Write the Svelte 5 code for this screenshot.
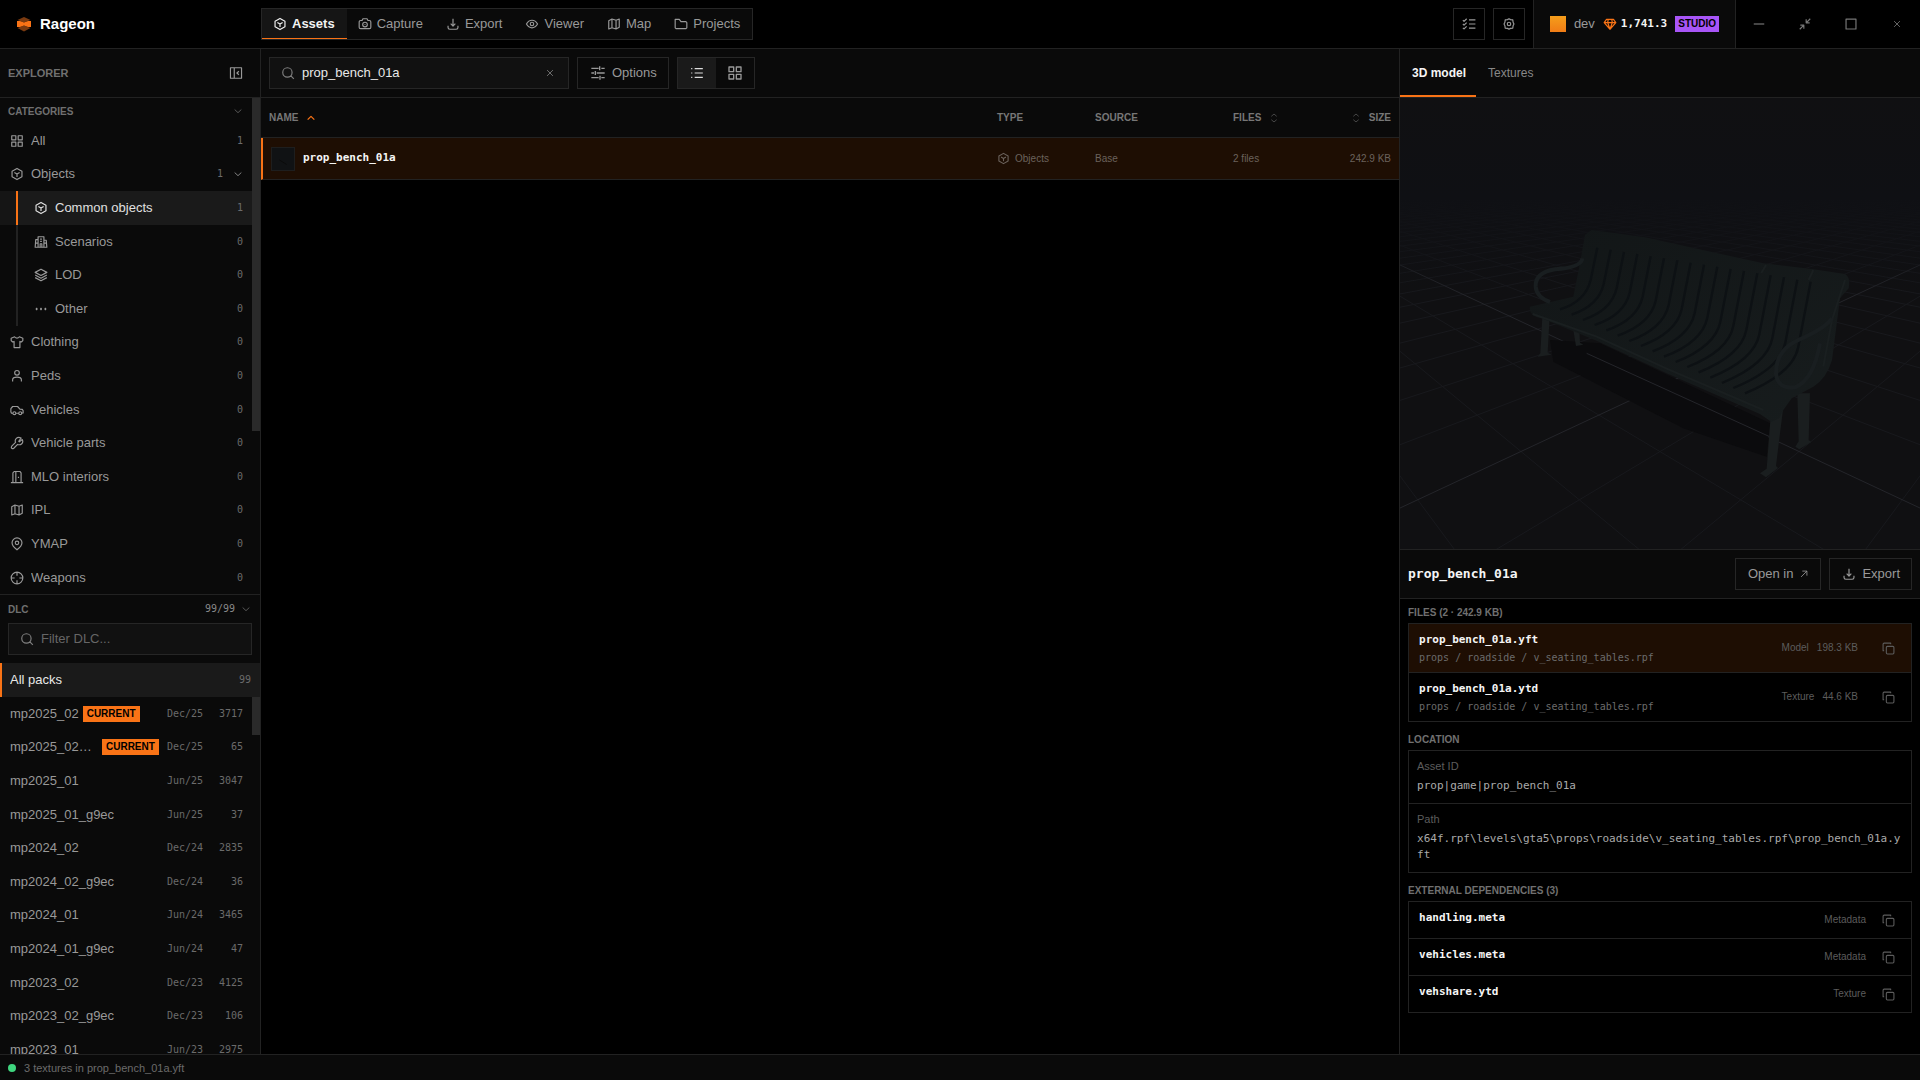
<script>
  const icons = {
    cube: 'M12 2.5l8.5 4.8v9.4L12 21.5l-8.5-4.8V7.3z M7.5 9.3 12 12l4.5-2.7 M12 12v5',
    camera: 'M2 8.5A2.5 2.5 0 0 1 4.5 6H7l1.5-3h7L17 6h2.5A2.5 2.5 0 0 1 22 8.5v9a2.5 2.5 0 0 1-2.5 2.5h-15A2.5 2.5 0 0 1 2 17.5z M16 13a4 4 0 1 1-8 0a4 4 0 1 1 8 0 M12 12.5v1',
    download: 'M12 3v12 M8 11.5l4 4 4-4 M3.5 15v3a3 3 0 0 0 3 3h11a3 3 0 0 0 3-3v-3',
    eye: 'M2.5 12C5 7.5 8.5 5.5 12 5.5s7 2 9.5 6.5C19 16.5 15.5 18.5 12 18.5S5 16.5 2.5 12z M15 12a3 3 0 1 1-6 0a3 3 0 1 1 6 0',
    map: 'M3 6.5 8.5 3.5l7 2 5.5-2v14l-5.5 3-7-2-5.5 2z M8.5 3.5v15 M15.5 5.5v15',
    folder: 'M2 4h7l3 4h8.5L22 9.5V18.5L20.5 20h-17L2 18.5z',
    tasks: 'M1.5 5.5 3.5 7.5 8 3 M1.5 12 3.5 14 8 9.5 M1.5 18.5 3.5 20.5 8 16 M12 5h11 M12 12h11 M12 19h11',
    gear: 'M9.5 4.5 12 3l2.5 1.5 4 .5.5 4 1.5 3-1.5 3-.5 4-4 .5L12 21l-2.5-1.5-4-.5-.5-4L3.5 12 5 9l.5-4z M15 12a3 3 0 1 1-6 0a3 3 0 1 1 6 0',
    gem: 'M6 4h12l4 5.5L12 21 2 9.5z M2 9.5h20 M8 9.5 12 21l4-11.5 M8 9.5 9 4 M16 9.5 15 4',
    minus: 'M3 12h18',
    shrink: 'M21 3l-7 7 M14 4v6h6 M3 21l7-7 M4 14h6v6',
    square: 'M3.5 3.5h17v17h-17z',
    close: 'M5 5l14 14 M19 5 5 19',
    panel: 'M2.5 3h19v18h-19z M9 3v18 M17 9l-3.5 3 3.5 3',
    down: 'M4 8.5l8 7.5 8-7.5',
    up: 'M4 16l8-8 8 8',
    sort: 'M5.5 8 12 2.5 18.5 8 M5.5 16 12 21.5 18.5 16',
    grid: 'M3 3h7v7H3z M14 3h7v7h-7z M3 14h7v7H3z M14 14h7v7h-7z',
    search: 'M19 11a8 8 0 1 1-16 0a8 8 0 1 1 16 0 M17 17l5 5',
    sliders: 'M2 5h11 M17 5h5 M14.5 2v6 M2 12h4 M10 12h12 M8 9v6 M2 19h11 M17 19h5 M15 16v6',
    list: 'M2 4.5h2 M2 12h2 M2 19.5h2 M8 4.5h14 M8 12h14 M8 19.5h14',
    building: 'M7 21V3h10v18 M7 8H3L2 21h20L21 9h-4 M10.5 7h3 M10.5 11h3 M10.5 21v-6h3v6 M2 14h5 M17 14h5',
    layers: 'M12 2 22 7.5 12 13 2 7.5z M2 12l10 5.5L22 12 M2 16.5 12 22l10-5.5',
    dots: 'M4 11h1v2H4z M11.5 11h1v2h-1z M19 11h1v2h-1z',
    shirt: 'M8 3 2 5.5v4L4.5 12 7 11v10.5h10V11l2.5 1L22 9.5v-4L16 3c-.5 3-7.5 3-8 0z',
    user: 'M16 6.5a4 4 0 1 1-8 0a4 4 0 1 1 8 0 M4.5 21.5v-3c0-6 15-6 15 0v3',
    car: 'M5 17.5H2.5L1.5 15V9.5L4.5 6H13l4 4.5 4 .5 1.5 2v4L20 17.5 M10 17.5h5 M10 17.5a2.5 2.5 0 1 1-5 0a2.5 2.5 0 1 1 5 0 M20 17.5a2.5 2.5 0 1 1-5 0a2.5 2.5 0 1 1 5 0',
    wrench: 'M15 9l4-5.5C12 0 7.5 6 9.5 11L3 17.5C1 20.5 4 23 6.5 21L13 14.5C18.5 16.5 24 12 21 6l-5 4z',
    door: 'M1.5 21.5h21 M5 21.5V5l2.5-2.5H17L19 5v16.5 M5 5v16 M10 3v18 M14.5 11.5v2',
    pin: 'M12 22C6 17.5 3.5 13.5 3.5 10a8.5 8.5 0 0 1 17 0c0 3.5-2.5 7.5-8.5 12z M15 10a3 3 0 1 1-6 0a3 3 0 1 1 6 0',
    target: 'M22 12a10 10 0 1 1-20 0a10 10 0 1 1 20 0 M12 2v6 M12 16v6 M2 12h6 M16 12h6',
    arrow: 'M5 19 19 5 M8 5h11v11',
    copy: 'M10 8h10a2 2 0 0 1 2 2v10a2 2 0 0 1-2 2H10a2 2 0 0 1-2-2V10a2 2 0 0 1 2-2z M16 4V2H4a2 2 0 0 0-2 2v12h2'
  };

  const tabs = [
    ['cube', 'Assets'], ['camera', 'Capture'], ['download', 'Export'],
    ['eye', 'Viewer'], ['map', 'Map'], ['folder', 'Projects']
  ];
  const windowControls = [
    ['minus', 'Minimize', 14], ['shrink', 'Compact', 14], ['square', 'Maximize', 14], ['close', 'Close', 10]
  ];
  const objectKinds = [
    ['cube', 'Common objects', 1], ['building', 'Scenarios', 0],
    ['layers', 'LOD', 0], ['dots', 'Other', 0]
  ];
  const categories = [
    ['shirt', 'Clothing'], ['user', 'Peds'], ['car', 'Vehicles'], ['wrench', 'Vehicle parts'],
    ['door', 'MLO interiors'], ['map', 'IPL'], ['pin', 'YMAP'], ['target', 'Weapons']
  ];
  const packs = [
    ['mp2025_02', 'Dec/25', 3717, true], ['mp2025_02_g9ec', 'Dec/25', 65, true],
    ['mp2025_01', 'Jun/25', 3047], ['mp2025_01_g9ec', 'Jun/25', 37],
    ['mp2024_02', 'Dec/24', 2835], ['mp2024_02_g9ec', 'Dec/24', 36],
    ['mp2024_01', 'Jun/24', 3465], ['mp2024_01_g9ec', 'Jun/24', 47],
    ['mp2023_02', 'Dec/23', 4125], ['mp2023_02_g9ec', 'Dec/23', 106],
    ['mp2023_01', 'Jun/23', 2975]
  ];
  const files = [
    ['prop_bench_01a.yft', 'Model', '198.3 KB'],
    ['prop_bench_01a.ytd', 'Texture', '44.6 KB']
  ];
  const dependencies = [
    ['handling.meta', 'Metadata'], ['vehicles.meta', 'Metadata'], ['vehshare.ytd', 'Texture']
  ];

  let query = $state('prop_bench_01a');
  let filter = $state('');

  // Perspective projection of a floor point onto the preview.
  function project(a, b) {
    const w = 1 - 0.109 * (a + b);
    return `${Math.round(780 + (163 * (a - b)) / w)} ${Math.round(699 / w - 79)}`;
  }
  const steps = Array.from({ length: 61 }, (_, i) => i - 30).filter((i) => i !== 0);
  const floor = steps
    .map((i) => `M${project(i, -40)}L${project(i, 7 - i)}M${project(-40, i)}L${project(7 - i, i)}`)
    .join('');
  const axes = `M${project(0, -40)}L${project(0, 7)}M${project(-40, 0)}L${project(7, 0)}`;

  // Gaps between the slats, running down the backrest and out over the seat.
  const gaps = Array.from({ length: 17 }, (_, i) => {
    const t = i / 16;
    const p = (x0, x1, y0, y1) => `${Math.round(x0 + (x1 - x0) * t)} ${Math.round(y0 + (y1 - y0) * t)}`;
    return `M${p(592, 1232, 203, 305)}L${p(572, 1195, 300, 500)}Q${p(556, 1180, 365, 580)} ${p(480, 1035, 388, 640)}`;
  }).join('');
</script>

{#snippet icon(name, size = 14)}
  <svg class="icon" width={size} height={size} viewBox="0 0 24 24" aria-hidden="true"><path d={icons[name]} /></svg>
{/snippet}

<div class="app">
  <header class="topbar">
    <div class="brand">
      <svg width="16" height="16" viewBox="0 0 16 16" aria-hidden="true">
        <path fill="#7a3a10" d="M8 1l6.5 3L8 6.5 1.5 4zM8 9.5l6.5 2.5L8 15.5 1.5 12z" />
        <path fill="#f97316" d="M1 5h3l4 1.5L12 5h3v6h-3L8 9.5 4 11H1z" />
      </svg>
      <strong>Rageon</strong>
    </div>
    <nav class="tabs">
      {#each tabs as [name, label], i}
        <button class:active={i === 0}>{@render icon(name)}{label}</button>
      {/each}
    </nav>
    <div class="tools">
      <button class="square" aria-label="Tasks">{@render icon('tasks')}</button>
      <button class="square" aria-label="Settings">{@render icon('gear')}</button>
    </div>
    <div class="account">
      <span class="avatar"></span>
      <span class="user">dev</span>
      <span class="credits">{@render icon('gem')}<b>1,741.3</b></span>
      <span class="badge studio">STUDIO</span>
    </div>
    <div class="window">
      {#each windowControls as [name, label, size]}
        <button aria-label={label}>{@render icon(name, size)}</button>
      {/each}
    </div>
  </header>

  <div class="body">
    <aside class="sidebar">
      <div class="bar explorer">
        <h2>EXPLORER</h2>
        <button class="bare" aria-label="Collapse explorer">{@render icon('panel')}</button>
      </div>
      <div class="sections">
        <section class="categories">
          <div class="scroll">
            <div class="heading">
              <h3>CATEGORIES</h3>
              <button class="bare dim" aria-label="Toggle categories">{@render icon('down', 10)}</button>
            </div>
            <button class="row">{@render icon('grid')}<span class="name">All</span><span class="count">1</span></button>
            <button class="row">
              {@render icon('cube')}<span class="name">Objects</span><span class="count">1</span>
              <span class="twist">{@render icon('down', 10)}</span>
            </button>
            <div class="children">
              {#each objectKinds as [name, label, count], i}
                <button class="row child" class:active={i === 0}>
                  {@render icon(name)}<span class="name">{label}</span><span class="count">{count}</span>
                </button>
              {/each}
            </div>
            {#each categories as [name, label]}
              <button class="row">{@render icon(name)}<span class="name">{label}</span><span class="count">0</span></button>
            {/each}
          </div>
          <div class="track"><div class="thumb tall"></div></div>
        </section>

        <section class="dlc">
          <div class="heading">
            <h3>DLC</h3>
            <span class="total">99/99</span>
            <button class="bare dim" aria-label="Toggle DLC">{@render icon('down', 10)}</button>
          </div>
          <label class="field filter">
            {@render icon('search')}
            <input type="text" placeholder="Filter DLC..." aria-label="Filter DLC" bind:value={filter} />
          </label>
          <button class="row all"><span class="name">All packs</span><span class="count">99</span></button>
          <div class="packs">
            <div class="scroll">
              {#each packs as [name, date, count, current]}
                <button class="row pack">
                  <span class="title">
                    <span class="name">{name}</span>
                    {#if current}<span class="badge current">CURRENT</span>{/if}
                  </span>
                  <span class="date">{date}</span>
                  <span class="count">{count}</span>
                </button>
              {/each}
            </div>
            <div class="track"><div class="thumb short"></div></div>
          </div>
        </section>
      </div>
    </aside>

    <main>
      <div class="bar toolbar">
        <label class="field search">
          {@render icon('search')}
          <input type="text" aria-label="Search assets" bind:value={query} />
          <button class="bare" aria-label="Clear search" onclick={() => (query = '')}>{@render icon('close', 10)}</button>
        </label>
        <button class="box">{@render icon('sliders', 16)}Options</button>
        <div class="views">
          <button class="active" aria-label="List view">{@render icon('list')}</button>
          <button aria-label="Grid view">{@render icon('grid', 16)}</button>
        </div>
      </div>
      <table>
        <thead>
          <tr>
            <th><button class="sorter on">NAME {@render icon('up', 10)}</button></th>
            <th class="type">TYPE</th>
            <th class="source">SOURCE</th>
            <th class="files"><button class="sorter">FILES {@render icon('sort', 10)}</button></th>
            <th class="size"><button class="sorter">{@render icon('sort', 10)} SIZE</button></th>
          </tr>
        </thead>
        <tbody>
          <tr>
            <td>
              <div class="asset">
                <svg class="preview" width="24" height="24" viewBox="0 0 24 24" aria-hidden="true">
                  <path d="M8 13l8 5" />
                </svg>
                <b>prop_bench_01a</b>
              </div>
            </td>
            <td><span class="kind">{@render icon('cube', 13)}Objects</span></td>
            <td>Base</td>
            <td>2 files</td>
            <td class="size">242.9 KB</td>
          </tr>
        </tbody>
      </table>
    </main>

    <aside class="details">
      <div class="bar modes" role="tablist">
        <button class="active" role="tab" aria-selected="true">3D model</button>
        <button role="tab" aria-selected="false">Textures</button>
      </div>

      <div class="viewport">
        <svg viewBox="0 -246 1560 1353" preserveAspectRatio="xMidYMid slice" role="img" aria-label="3D preview of a bench">
          <defs>
            <linearGradient id="fog" x1="0" y1="0" x2="0" y2="1">
              <stop offset="0" stop-color="#101012" />
              <stop offset=".5" stop-color="#0f1014" />
              <stop offset="1" stop-color="#0f1014" stop-opacity="0" />
            </linearGradient>
            <linearGradient id="paint" x1="0" y1="0" x2="1" y2="1">
              <stop offset="0" stop-color="#121617" />
              <stop offset="1" stop-color="#171c1d" />
            </linearGradient>
          </defs>
          <path class="floor" d={floor} />
          <path class="axes" d={axes} />
          <rect x="-200" y="-246" width="1960" height="600" fill="url(#fog)" />
          <path fill="#0b0b0d" d="M450 480 600 490 1110 730 1100 830 850 745 460 545z" />
          <path class="axes" d="M560 520 1120 775" />
          <path class="leg" d="M427 410h22l-6 108 12 6-42 6 8-10zM520 450h18l2 38 10 6-22 4z" />
          <path class="leg" d="M1192 640h38l-4 140 8 6-36 22-12-8 10-16zM1112 710l38-30-22 178 6 6-36 28-18-12 20-14z" />
          <path
            fill="url(#paint)"
            d="M555 165 575 150 735 172 1090 250 1240 268 1335 282Q1352 292 1346 325L1320 355 1296 540Q1280 595 1240 620L1175 655 1150 690 1138 715 1115 726 1080 702 800 580 590 482 425 415Q385 408 390 380L520 350 540 250z"
          />
          <path class="gaps" d={gaps} />
          <path class="edge" d="M398 402 590 470 800 566 1090 690 M1098 255l-14 24 M1240 270l-14 30 M1335 300 1296 420 1270 560" />
          <path class="arm" d="M547 235Q545 262 465 268 405 278 407 320 410 352 450 366" />
          <path class="arm" d="M1296 415Q1275 445 1195 480 1128 510 1128 580 1132 628 1185 622 1240 600 1260 490" />
        </svg>
      </div>

      <div class="bar titlebar">
        <h1>prop_bench_01a</h1>
        <button class="box">Open in {@render icon('arrow', 10)}</button>
        <button class="box">{@render icon('download')}Export</button>
      </div>

      <div class="info">
        <h3>FILES (2 · 242.9 KB)</h3>
        <ul class="card">
          {#each files as [name, kind, size], i}
            <li class:active={i === 0}>
              <div class="file"><b>{name}</b><span class="path">props / roadside / v_seating_tables.rpf</span></div>
              <span>{kind}</span><span class="bytes">{size}</span>
              <button class="bare copy" aria-label="Copy {name}">{@render icon('copy', 13)}</button>
            </li>
          {/each}
        </ul>

        <h3>LOCATION</h3>
        <dl class="card">
          <div><dt>Asset ID</dt><dd>prop|game|prop_bench_01a</dd></div>
          <div><dt>Path</dt><dd>{'x64f.rpf\\levels\\gta5\\props\\roadside\\v_seating_tables.rpf\\prop_bench_01a.yft'}</dd></div>
        </dl>

        <h3>EXTERNAL DEPENDENCIES (3)</h3>
        <ul class="card">
          {#each dependencies as [name, kind]}
            <li>
              <div class="file"><b>{name}</b></div>
              <span>{kind}</span>
              <button class="bare copy near" aria-label="Copy {name}">{@render icon('copy', 13)}</button>
            </li>
          {/each}
        </ul>
      </div>
    </aside>
  </div>

  <footer><span class="dot"></span>3 textures in prop_bench_01a.yft</footer>
</div>

<style>
  :global(body) {
    margin: 0;
    background: #000;
  }
  .app {
    --line: #222;
    --panel: #0a0a0a;
    --orange: #f97316;
    --mono: 'DejaVu Sans Mono', 'Liberation Mono', monospace;
    display: flex;
    flex-direction: column;
    height: 100vh;
    overflow: hidden;
    background: #000;
    color: #999;
    font: 13px/16px 'Liberation Sans', Arial, sans-serif;
  }
  .app *, .app {
    box-sizing: border-box;
  }
  button {
    display: flex;
    align-items: center;
    margin: 0;
    padding: 0;
    border: 0;
    background: none;
    color: inherit;
    font: inherit;
    text-align: left;
    cursor: pointer;
  }
  h1, h2, h3, ul, dl, dd {
    margin: 0;
    padding: 0;
    list-style: none;
  }
  h2, h3 {
    color: #707070;
    font-size: 10px;
    font-weight: 700;
    line-height: 15px;
  }
  .icon {
    flex: none;
    fill: none;
    stroke: currentColor;
    stroke-width: 2;
    stroke-linejoin: round;
  }
  .badge {
    flex: none;
    color: #000;
    font-size: 10px;
    font-weight: 700;
  }
  .bar {
    display: flex;
    flex: none;
    align-items: center;
    height: 49px;
    padding: 0 8px;
    border-bottom: 1px solid var(--line);
    background: var(--panel);
  }
  .dim {
    color: #666;
  }

  .topbar {
    display: flex;
    flex: none;
    align-items: center;
    height: 49px;
    border-bottom: 1px solid var(--line);
  }
  .brand {
    display: flex;
    align-items: center;
    gap: 8px;
    width: 261px;
    padding-left: 16px;
    color: #fff;
    font-size: 15px;
  }
  .tabs {
    display: flex;
    height: 32px;
    border: 1px solid #262626;
    background: var(--panel);
  }
  .tabs button {
    gap: 5px;
    padding: 0 12px 0 11px;
    border-bottom: 1px solid transparent;
  }
  .tabs .active {
    border-color: var(--orange);
    background: #151515;
    color: #f2f2f2;
    font-weight: 700;
  }
  .tools {
    display: flex;
    gap: 8px;
    margin: 0 8px 0 auto;
  }
  .square {
    justify-content: center;
    width: 32px;
    height: 32px;
    border: 1px solid #262626;
  }
  .account {
    display: flex;
    align-items: center;
    gap: 8px;
    height: 48px;
    padding: 0 16px;
    border: solid var(--line);
    border-width: 0 1px;
    background: var(--panel);
  }
  .avatar {
    width: 16px;
    height: 16px;
    background: linear-gradient(#f59e1b, #f07c16);
  }
  .credits {
    display: flex;
    align-items: center;
    gap: 4px;
    color: var(--orange);
  }
  .credits b {
    color: #f5f5f5;
    font: 700 11px/16px var(--mono);
  }
  .studio {
    padding: 0 3px;
    background: #a855f7;
  }
  .window {
    display: flex;
    height: 48px;
    color: #777;
  }
  .window button {
    justify-content: center;
    width: 46px;
  }

  .body {
    display: flex;
    flex: 1;
    min-height: 0;
  }
  .sidebar {
    display: flex;
    flex: none;
    flex-direction: column;
    width: 261px;
    border-right: 1px solid var(--line);
    background: var(--panel);
  }
  .explorer {
    justify-content: space-between;
    padding-right: 17px;
  }
  .explorer h2 {
    font-size: 11px;
  }
  .sections {
    display: grid;
    flex: 1;
    grid-template-rows: 27fr 25fr;
    grid-template-columns: minmax(0, 1fr);
    min-height: 0;
  }
  .categories, .packs {
    display: flex;
    min-height: 0;
    overflow: hidden;
  }
  .scroll {
    flex: 1;
    min-width: 0;
  }
  .track {
    flex: none;
    width: 8px;
  }
  .thumb {
    background: #2a2a2a;
  }
  .tall {
    height: 67%;
  }
  .short {
    height: 38px;
  }
  .heading {
    display: flex;
    align-items: center;
    gap: 6px;
    height: 26px;
    padding: 0 9px 0 8px;
  }
  .heading h3 {
    margin-right: auto;
  }
  .row {
    gap: 7px;
    width: 100%;
    height: 2.4em;
    padding: 0 9px 0 10px;
    font-size: 14px;
  }
  .name {
    flex: 1;
    overflow: hidden;
    font-size: 13px;
    text-overflow: ellipsis;
    white-space: nowrap;
  }
  .count, .date, .total {
    color: #6b6b6b;
    font: 10px/16px var(--mono);
  }
  .twist {
    display: flex;
    padding-left: 3px;
  }
  .child {
    padding-left: 34px;
    background: linear-gradient(90deg, transparent 16px, var(--line) 16px, var(--line) 18px, transparent 18px);
  }
  .child.active {
    background: linear-gradient(90deg, #151515 16px, var(--orange) 16px, var(--orange) 18px, #1a1a1a 18px);
    color: #e0e0e0;
  }
  .dlc {
    display: flex;
    flex-direction: column;
    min-height: 0;
    border-top: 1px solid var(--line);
  }
  .dlc .heading {
    flex: none;
    height: 28px;
  }
  .total {
    color: #888;
  }
  .field {
    display: flex;
    align-items: center;
    gap: 7px;
    height: 32px;
    padding: 0 11px;
    border: 1px solid #262626;
    background: #111;
  }
  .field input {
    flex: 1;
    min-width: 0;
    padding: 0;
    border: 0;
    outline: 0;
    background: none;
    color: #e8e8e8;
    font: inherit;
  }
  .field input::placeholder {
    color: #666;
  }
  .field .icon {
    stroke: #808080;
  }
  .filter {
    flex: none;
    margin: 0 8px 8px;
  }
  .all {
    flex: none;
    padding-left: 8px;
    border-left: 2px solid var(--orange);
    background: #1a1a1a;
    color: #e8e8e8;
  }
  .packs {
    flex: 1;
  }
  .pack {
    gap: 8px;
  }
  .title {
    display: flex;
    flex: 1;
    align-items: center;
    gap: 4px;
    min-width: 0;
  }
  .title .name {
    flex: 0 1 auto;
  }
  .current {
    padding: 0 4px;
    background: var(--orange);
  }
  .pack .count {
    width: 32px;
    text-align: right;
  }

  main {
    flex: 1;
    min-width: 0;
  }
  .toolbar {
    gap: 8px;
  }
  .search {
    width: 300px;
  }
  .search .bare {
    padding: 2px;
  }
  .box {
    gap: 6px;
    height: 32px;
    padding: 0 11px 0 12px;
    border: 1px solid #262626;
  }
  .views {
    display: flex;
    height: 32px;
    border: 1px solid #262626;
  }
  .views button {
    justify-content: center;
    width: 38px;
  }
  .views .active {
    background: #1a1a1a;
    color: #ddd;
  }
  table {
    width: 100%;
    border-spacing: 0;
    table-layout: fixed;
    font-size: 10px;
  }
  th, td {
    padding: 0 8px;
    border-bottom: 1px solid var(--line);
    text-align: left;
  }
  th {
    height: 40px;
    background: var(--panel);
    color: #777;
  }
  td {
    height: 42px;
    background: rgb(249 115 22 / 12%);
    color: #6b625c;
  }
  td:first-child {
    border-left: 2px solid var(--orange);
  }
  .type {
    width: 98px;
  }
  .source {
    width: 138px;
  }
  .files {
    width: 100px;
  }
  .size {
    width: 74px;
    text-align: right;
  }
  .sorter {
    display: inline-flex;
    gap: 8px;
    vertical-align: middle;
  }
  .sorter .icon {
    stroke: #505050;
  }
  .sorter.on .icon {
    stroke: var(--orange);
    stroke-width: 3;
  }
  .asset {
    display: flex;
    gap: 8px;
  }
  .preview {
    border: 1px solid #1e1e1e;
    background: #101214;
    stroke: #0a0a0a;
  }
  b {
    color: #f5f5f5;
    font: 700 11px/16px var(--mono);
  }
  .asset b {
    padding-top: 3px;
  }
  .kind {
    display: flex;
    align-items: center;
    gap: 5px;
  }

  .details {
    display: flex;
    flex: none;
    flex-direction: column;
    width: 27.135%;
    border-left: 1px solid var(--line);
  }
  .modes {
    padding: 0;
    font-size: 12px;
  }
  .modes button {
    height: 48px;
    padding: 0 10px 0 12px;
    border: solid transparent;
    border-width: 2px 0;
    color: #888;
  }
  .modes .active {
    border-bottom-color: var(--orange);
    color: #f5f5f5;
    font-weight: 700;
  }
  .viewport {
    flex: 1;
    min-height: 200px;
    border-bottom: 1px solid var(--line);
    background: #101012;
  }
  .viewport svg {
    display: block;
    width: 100%;
    height: 100%;
  }
  .floor, .axes, .gaps, .edge, .arm {
    fill: none;
  }
  .floor {
    stroke: #18191d;
    stroke-width: 3;
  }
  .axes {
    stroke: #24252a;
    stroke-width: 3;
  }
  .leg {
    fill: #1a1e1f;
  }
  .gaps {
    stroke: #0d1114;
    stroke-width: 7;
  }
  .edge {
    stroke: #1a1f20;
    stroke-width: 6;
  }
  .arm {
    stroke: #191e20;
    stroke-width: 12;
  }
  .titlebar {
    gap: 8px;
  }
  h1 {
    margin-right: auto;
    color: #f5f5f5;
    font: 700 13px/16px var(--mono);
  }
  .info {
    flex: 0 0 455px;
    padding: 6px 8px;
  }
  .info h3 {
    margin-bottom: 3px;
  }
  .card {
    margin-bottom: 10px;
    border: 1px solid var(--line);
  }
  .card li, .card > div {
    border-top: 1px solid var(--line);
  }
  .card > :first-child {
    border-top: 0;
  }
  .card li {
    display: flex;
    align-items: center;
    gap: 8px;
    padding: 0 16px 0 10px;
    color: #5c5c5c;
    font-size: 10px;
  }
  .card .active {
    background: rgb(249 115 22 / 12%);
  }
  .file {
    display: flex;
    flex: 1;
    flex-direction: column;
    gap: 3px;
    min-height: 36px;
    padding: 8px 0 7px;
  }
  .path {
    color: #6b6b6b;
    font: 10px/14px var(--mono);
  }
  .copy {
    margin-left: 16px;
    color: #5c5c5c;
  }
  .near {
    margin-left: 8px;
  }
  .card > div {
    padding: 8px 8px 9px;
  }
  dt {
    margin-bottom: 4px;
    color: #5c5c5c;
    font-size: 11px;
    line-height: 15px;
  }
  dd {
    color: #aaa;
    font: 11px/16px var(--mono);
    overflow-wrap: anywhere;
  }
  footer {
    display: flex;
    flex: none;
    align-items: center;
    gap: 8px;
    height: 26px;
    padding: 0 8px;
    border-top: 1px solid var(--line);
    background: var(--panel);
    color: #6b6b6b;
    font-size: 11px;
  }
  .dot {
    width: 8px;
    height: 8px;
    border-radius: 50%;
    background: #3fd67f;
  }
</style>
